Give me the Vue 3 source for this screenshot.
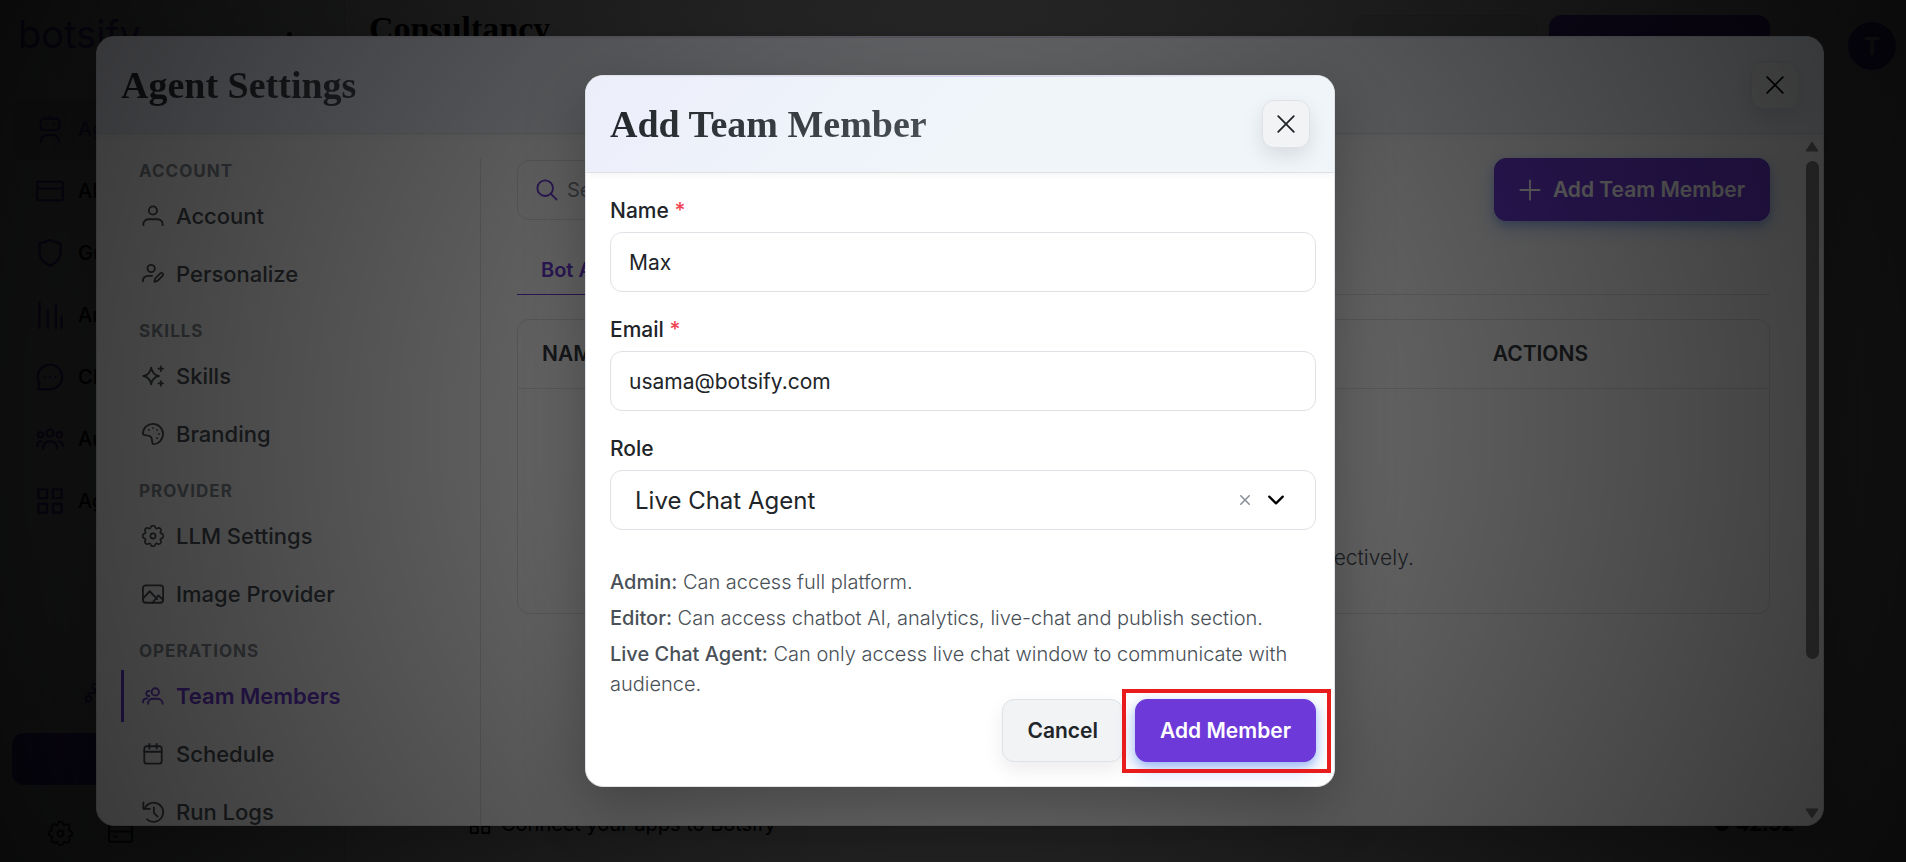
<script setup>
import { reactive, ref } from "vue";

const form = reactive({
  name: "Max",
  email: "usama@botsify.com",
  role: "Live Chat Agent"
});

const search = ref("");
const roles = ["Admin", "Editor", "Live Chat Agent"];

const roleHints = [
  { role: "Admin:", text: "Can access full platform." },
  {
    role: "Editor:",
    text: "Can access chatbot AI, analytics, live-chat and publish section."
  },
  {
    role: "Live Chat Agent:",
    text: "Can only access live chat window to communicate with audience."
  }
];

const gear =
  "M9.800 1.340c-.53-1.790-3.070-1.790-3.600 0l-.09.320a.870.870 0 0 1-1.260.520l-.29-.16c-1.640-.89-3.430.900-2.540 2.540l.16.290a.870.870 0 0 1-.52 1.260l-.32.090c-1.790.530-1.790 3.070 0 3.600l.32.090a.870.870 0 0 1 .52 1.260l-.16.290c-.89 1.640.900 3.430 2.540 2.540l.29-.16a.870.870 0 0 1 1.260.520l.09.320c.53 1.790 3.070 1.790 3.600 0l.09-.32a.870.870 0 0 1 1.260-.52l.29.160c1.640.890 3.430-.9 2.540-2.540l-.16-.29a.870.870 0 0 1 .52-1.260l.32-.09c1.790-.53 1.790-3.070 0-3.600l-.32-.09a.870.870 0 0 1-.52-1.260l.16-.29c.89-1.640-.9-3.430-2.540-2.540l-.29.160a.870.870 0 0 1-1.260-.52z";

const icons = {
  user: ["M12 1.500a4.500 4.500 0 1 1 0 9a4.500 4.500 0 0 1 0-9", "M1.500 22v-1.500c0-3 3-5 6-5h9c3 0 6 2 6 5V22"],
  userEdit: [
    "M10 2a4 4 0 1 1 0 8a4 4 0 0 1 0-8",
    "M1 20c0-4 2.500-6 6-6h4",
    "M13.500 20.500l.8-3.500 5.700-5.700c1.600-1.400 4 .8 2.500 2.500L17 19.500z"
  ],
  sparkles: [
    "M10 3c1 5.500 3 8 8.500 9c-5.500 1-7.500 3.500-8.500 9c-1-5.500-3-8-8.500-9c5.500-1 7.500-3.500 8.500-9z",
    "M20.500 1.500v5M18 4h5",
    "M20.500 17.500v5M18 20h5"
  ],
  palette: [
    "M1 11.500C1 5.500 6 1 12 1s11 5 11 11-5 11-10 11c-2 0-2-1.500-2-3.500 0-3.500-1.500-6-6-6-2.500 0-4-.5-4-2z",
    "M7.500 7.500h.01M12 5.500h.01M16.500 7.500h.01M18.500 12h.01M16.500 16.500h.01"
  ],
  gear: [gear, "M8 6a2 2 0 1 1 0 4a2 2 0 0 1 0-4"],
  image: [
    "M4 2.500h16a3 3 0 0 1 3 3v13a3 3 0 0 1-3 3H4a3 3 0 0 1-3-3v-13a3 3 0 0 1 3-3z",
    "M1 17l7.500-8 8 8.500M11.500 21.500l6.500-8 5 5"
  ],
  team: [
    "M14.500 3.500a4 4 0 1 1 0 8a4 4 0 0 1 0-8",
    "M6.500 20.500c0-4 3-5.500 5.500-5.500h5c3 0 5.500 2 5.500 5.500",
    "M8 6.500a2.800 2.800 0 1 0 0 5.500M1 19c0-3 2-4.500 5-4.500"
  ],
  calendar: [
    "M5 3.500h14a2.500 2.500 0 0 1 2.500 2.500v14a2.500 2.500 0 0 1-2.500 2.500H5A2.500 2.500 0 0 1 2.500 20V6A2.500 2.500 0 0 1 5 3.500z",
    "M2.500 9.500h19M8 1v5M16 1v5"
  ],
  history: ["M5.500 20A10.500 10.500 0 1 0 3.500 7", "M1.500 1.500V8.500h7", "M13 7v6l4 4"],
  search: ["M10 1.500a8.500 8.500 0 1 1 0 17a8.500 8.500 0 0 1 0-17", "M16 16l6.500 6.500"],
  plus: ["M12 1.500v21M1.500 12h21"],
  close: ["M3.500 3.500l17 17M20.500 3.500l-17 17"],
  chevron: ["M3 7.500l9 9 9-9"],
  bot: [
    "M7 3h10a3 3 0 0 1 3 3v4a3 3 0 0 1-3 3H7a3 3 0 0 1-3-3V6a3 3 0 0 1 3-3z",
    "M12 1v2M9 8h.01M15 8h.01M4 23c0-4 3-6 8-6s8 2 8 6"
  ],
  card: ["M3 4h18a2 2 0 0 1 2 2v12a2 2 0 0 1-2 2H3a2 2 0 0 1-2-2V6a2 2 0 0 1 2-2z", "M1 10h22"],
  billing: ["M3 4h18a2 2 0 0 1 2 2v12a2 2 0 0 1-2 2H3a2 2 0 0 1-2-2V6a2 2 0 0 1 2-2z", "M1 10h22M5.500 15h3"],
  shield: ["M12 1l9 3v8c0 5-4 8.500-9 11c-5-2.500-9-6-9-11V4z"],
  bars: ["M3 1v22M10 8v15M17 3v20M22 13v10"],
  chat: ["M2 22.500l1-5A10.500 10.500 0 1 1 12 22.500z", "M7.500 12h.01M12 12h.01M16.500 12h.01"],
  group: [
    "M12 4a3 3 0 1 1 0 6a3 3 0 0 1 0-6M4 6a2.300 2.300 0 1 1 0 4.600A2.300 2.300 0 0 1 4 6M20 6a2.300 2.300 0 1 1 0 4.600A2.300 2.300 0 0 1 20 6",
    "M6 20c0-4 2-6 6-6s6 2 6 6M1 18c0-3 1-4 3.500-4M23 18c0-3-1-4-3.500-4"
  ],
  grid: ["M2 2h7.500v7.500H2zM14.500 2H22v7.500h-7.500zM2 14.500h7.500V22H2zM14.500 14.500H22V22h-7.500z"],
  flow: [
    "M12 2a3 3 0 1 1 0 6a3 3 0 0 1 0-6M5 15.500a3 3 0 1 1 0 6a3 3 0 0 1 0-6M19 15.500a3 3 0 1 1 0 6a3 3 0 0 1 0-6",
    "M12 8v4M5 15v-3h14v3"
  ]
};

const appNav = [
  { label: "Agents", icon: "bot", active: true },
  { label: "AI Credits", icon: "card" },
  { label: "Guardrails", icon: "shield" },
  { label: "Analytics", icon: "bars" },
  { label: "Chats", icon: "chat" },
  { label: "Audience", icon: "group" },
  { label: "Agency", icon: "grid" }
];

const settingsGroups = [
  {
    title: "Account",
    items: [
      { label: "Account", icon: "user" },
      { label: "Personalize", icon: "userEdit" }
    ]
  },
  {
    title: "Skills",
    items: [
      { label: "Skills", icon: "sparkles" },
      { label: "Branding", icon: "palette" }
    ]
  },
  {
    title: "Provider",
    items: [
      { label: "LLM Settings", icon: "gear" },
      { label: "Image Provider", icon: "image" }
    ]
  },
  {
    title: "Operations",
    items: [
      { label: "Team Members", icon: "team", active: true },
      { label: "Schedule", icon: "calendar" },
      { label: "Run Logs", icon: "history" }
    ]
  }
];

// the gear is drawn on a 16 unit grid, every other icon on 24
function viewBox(name) {
  return name === "gear" ? "-0.5 -0.5 17 17" : "0 0 24 24";
}
</script>

<template>
  <div class="app">
    <aside class="app-sidebar">
      <div class="brand">
        <span>botsify</span>
        <i class="dot"></i>
      </div>

      <nav class="app-nav">
        <a
          v-for="item in appNav"
          :key="item.label"
          href="#"
          :class="['app-link', { 'is-active': item.active }]"
        >
          <svg class="icon icon-large" viewBox="0 0 24 24">
            <path v-for="d in icons[item.icon]" :key="d" :d="d" />
          </svg>
          {{ item.label }}
        </a>
      </nav>

      <div class="app-sidebar-bottom">
        <button class="flow-button" type="button" aria-label="Workflows">
          <svg class="icon" viewBox="0 0 24 24">
            <path v-for="d in icons.flow" :key="d" :d="d" />
          </svg>
        </button>
        <button class="upgrade-button" type="button" aria-label="Upgrade"></button>
        <div class="app-shortcuts">
          <svg class="icon icon-medium icon-gear" :viewBox="viewBox('gear')">
            <path v-for="d in icons.gear" :key="d" :d="d" />
          </svg>
          <svg class="icon icon-medium" viewBox="0 0 24 24">
            <path v-for="d in icons.billing" :key="d" :d="d" />
          </svg>
        </div>
      </div>
    </aside>

    <div class="app-main">
      <header class="app-header">
        <h1>Consultancy</h1>
        <div class="app-header-actions">
          <button class="outline-action" type="button" aria-label="Preview"></button>
          <button class="solid-action" type="button" aria-label="Publish"></button>
          <i class="dot dot-large"></i>
          <span class="avatar">T</span>
        </div>
      </header>
      <footer class="app-footer">
        <span class="app-footer-connect">
          <svg class="icon" viewBox="0 0 24 24">
            <path v-for="d in icons.grid" :key="d" :d="d" />
          </svg>
          Connect your apps to Botsify
        </span>
        <strong>● 42.92</strong>
      </footer>
    </div>

    <div class="overlay">
      <section class="modal settings-modal">
        <header class="modal-header">
          <h2>Agent Settings</h2>
          <button class="close-button" type="button" aria-label="Close settings">
            <svg class="icon" viewBox="0 0 24 24">
              <path v-for="d in icons.close" :key="d" :d="d" />
            </svg>
          </button>
        </header>

        <div class="settings-body">
          <nav class="settings-nav">
            <div v-for="group in settingsGroups" :key="group.title" class="settings-group">
              <h3>{{ group.title }}</h3>
              <a
                v-for="item in group.items"
                :key="item.label"
                href="#"
                :class="['settings-link', { 'is-active': item.active }]"
              >
                <svg :class="['icon', `icon-${item.icon}`]" :viewBox="viewBox(item.icon)">
                  <path v-for="d in icons[item.icon]" :key="d" :d="d" />
                </svg>
                {{ item.label }}
              </a>
            </div>
          </nav>

          <div class="settings-content">
            <div class="toolbar">
              <label class="search-box">
                <svg class="icon" viewBox="0 0 24 24">
                  <path v-for="d in icons.search" :key="d" :d="d" />
                </svg>
                <input v-model="search" type="text" placeholder="Search" aria-label="Search" />
              </label>
              <button class="primary-button" type="button">
                <svg class="icon" viewBox="0 0 24 24">
                  <path v-for="d in icons.plus" :key="d" :d="d" />
                </svg>
                Add Team Member
              </button>
            </div>

            <div class="tabs">
              <button class="tab" type="button">Bot Admins</button>
            </div>

            <div class="table-card">
              <table>
                <thead>
                  <tr>
                    <th class="name-column">NAME</th>
                    <th class="email-column">EMAIL</th>
                    <th>ACTIONS</th>
                  </tr>
                </thead>
                <tbody>
                  <tr>
                    <td colspan="3">Add team members to manage your chatbot effectively.</td>
                  </tr>
                </tbody>
              </table>
            </div>
          </div>

          <div class="scrollbar">
            <svg viewBox="0 0 14 11"><path d="M7 1l6 9H1z" /></svg>
            <div class="scrollbar-track"><div class="scrollbar-thumb"></div></div>
            <svg viewBox="0 0 14 11"><path d="M1 1h12L7 10z" /></svg>
          </div>
        </div>
      </section>
    </div>

    <div class="overlay">
      <form class="modal member-modal" @submit.prevent>
        <header class="modal-header">
          <h2>Add Team Member</h2>
          <button class="close-button" type="button" aria-label="Close">
            <svg class="icon" viewBox="0 0 24 24">
              <path v-for="d in icons.close" :key="d" :d="d" />
            </svg>
          </button>
        </header>

        <div class="member-body">
          <div class="field">
            <label for="member-name">Name <span class="required">*</span></label>
            <input id="member-name" v-model="form.name" type="text" />
          </div>

          <div class="field">
            <label for="member-email">Email <span class="required">*</span></label>
            <input id="member-email" v-model="form.email" type="email" />
          </div>

          <div class="field">
            <label for="member-role">Role</label>
            <div class="select-box">
              <select id="member-role" v-model="form.role">
                <option v-for="role in roles" :key="role">{{ role }}</option>
              </select>
              <button class="clear-button" type="button" aria-label="Clear role" @click="form.role = ''">
                <svg class="icon" viewBox="0 0 24 24">
                  <path v-for="d in icons.close" :key="d" :d="d" />
                </svg>
              </button>
              <svg class="icon chevron" viewBox="0 0 24 24">
                <path v-for="d in icons.chevron" :key="d" :d="d" />
              </svg>
            </div>
          </div>

          <div class="role-hints">
            <p v-for="hint in roleHints" :key="hint.role">
              <strong>{{ hint.role }}</strong> {{ hint.text }}
            </p>
          </div>

          <div class="member-actions">
            <button class="ghost-button" type="button">Cancel</button>
            <div class="highlighted">
              <button class="primary-button" type="submit">Add Member</button>
            </div>
          </div>
        </div>
      </form>
    </div>
  </div>
</template>

<style>
body {
  margin: 0;
  overflow: hidden;
}
</style>

<style scoped>
.app,
.app * {
  box-sizing: border-box;
}

.app {
  background: #ffffff;
  color: #212529;
  display: flex;
  font-family: Inter, "Liberation Sans", sans-serif;
  font-size: 20px;
  height: 100vh;
  overflow: hidden;
  position: relative;
}

button,
input,
select {
  font: inherit;
}

h1,
h2,
h3,
p {
  margin: 0;
}

a {
  color: inherit;
  text-decoration: none;
}

.icon {
  fill: none;
  flex: none;
  height: 22px;
  stroke: currentColor;
  stroke-linecap: round;
  stroke-linejoin: round;
  stroke-width: 2;
  width: 22px;
}

.icon-gear {
  stroke-width: 1.3;
}

.icon-medium {
  height: 25px;
  width: 25px;
}

.icon-large {
  height: 28px;
  width: 28px;
}

/* application shell */
.app-sidebar {
  background: #f4faf8;
  border-right: 1px solid #dee2e6;
  display: flex;
  flex-direction: column;
  padding: 12px 12px 16px;
  width: 345px;
}

.brand {
  align-items: center;
  color: #6d3ad9;
  display: flex;
  font-size: 38px;
  font-weight: 400;
  justify-content: space-between;
  line-height: 44px;
  padding: 0 40px 0 6px;
}

.dot {
  background: #000000;
  border-radius: 50%;
  height: 5px;
  width: 5px;
}

.dot-large {
  height: 7px;
  width: 7px;
}

.app-nav {
  display: flex;
  flex-direction: column;
  padding-top: 42px;
}

.app-link {
  align-items: center;
  border-radius: 12px;
  color: #000000;
  display: flex;
  font-weight: 500;
  gap: 14px;
  height: 62px;
  padding-left: 24px;
}

.app-link .icon,
.flow-button {
  color: #6d3ad9;
}

.app-link.is-active {
  background: #ebe4f5;
  color: #6d3ad9;
}

.app-sidebar-bottom {
  display: flex;
  flex-direction: column;
  gap: 12px;
  margin-top: auto;
}

.flow-button,
.upgrade-button {
  background: #f1f3fb;
  border: 0;
  border-radius: 12px;
  height: 52px;
  padding: 0 72px;
  text-align: left;
}

.upgrade-button {
  background: #6d3ad9;
}

.app-shortcuts {
  display: flex;
  gap: 35px;
  padding: 24px 36px 0;
}

.app-main {
  display: flex;
  flex: 1;
  flex-direction: column;
  justify-content: space-between;
}

.app-header {
  align-items: flex-start;
  display: flex;
  justify-content: space-between;
  padding: 10px 10px 0 24px;
}

.app-header h1 {
  color: #000000;
  font-family: "Liberation Serif", serif;
  font-size: 34px;
  line-height: 38px;
}

.app-header-actions {
  align-items: center;
  display: flex;
  padding-top: 5px;
}

.outline-action,
.solid-action {
  border: 1px solid #dee2e6;
  border-radius: 12px;
  height: 62px;
  margin-right: 12px;
  width: 184px;
}

.outline-action {
  background: #f1f3f5;
}

.solid-action {
  background: #6d3ad9;
  border-color: #6d3ad9;
  margin-right: 35px;
  width: 221px;
}

.avatar {
  align-items: center;
  background: #6d3ad9;
  border-radius: 50%;
  color: #ffffff;
  display: flex;
  font-size: 24px;
  font-weight: 700;
  height: 48px;
  justify-content: center;
  margin-left: 36px;
  width: 48px;
}

.app-footer {
  align-items: center;
  color: #000000;
  display: flex;
  justify-content: space-between;
  padding: 0 112px 26px 124px;
}

.app-footer-connect {
  align-items: center;
  display: flex;
  gap: 10px;
}

.overlay {
  align-items: center;
  background: radial-gradient(circle, rgba(0, 0, 0, 0.5), rgba(0, 0, 0, 0.8));
  display: flex;
  inset: 0 -14px 0 0;
  justify-content: center;
  position: absolute;
}

.modal {
  background: #ffffff;
  border: 1px solid #dee2e6;
  border-radius: 18px;
  box-shadow: 0 20px 60px rgba(0, 0, 0, 0.3);
  display: flex;
  flex-direction: column;
  overflow: hidden;
  position: relative;
}

.modal-header {
  align-items: center;
  background: linear-gradient(135deg, #eceefa, #f0f5fa 50%);
  border-bottom: 1px solid #dee2e6;
  box-shadow: 0 1px 8px rgba(0, 0, 0, 0.06);
  display: flex;
  flex: none;
  justify-content: space-between;
  padding: 24px;
}

.modal-header::before {
  background: linear-gradient(90deg, transparent, #d8ccf8, transparent);
  content: "";
  height: 1px;
  inset: 0 0 auto;
  position: absolute;
}

.modal-header h2 {
  background: linear-gradient(135deg, #212529, #495057);
  background-clip: text;
  color: transparent;
  font-family: "Liberation Serif", serif;
  font-size: 38px;
  font-weight: 700;
  line-height: 48px;
}

.close-button {
  align-items: center;
  background: #f1f3f5;
  border: 1px solid #dee2e6;
  border-radius: 12px;
  box-shadow: 0 8px 20px rgba(0, 0, 0, 0.1);
  color: #212529;
  display: flex;
  height: 48px;
  justify-content: center;
  padding: 0;
  width: 48px;
}

.settings-modal .close-button {
  color: #000000;
}

/* settings dialog */
.settings-modal {
  height: calc(100% - 72px);
  width: 90%;
}

.settings-body {
  display: flex;
  flex: 1;
  min-height: 0;
  padding-left: 24px;
}

.settings-nav {
  border-right: 1px solid #dee2e6;
  display: flex;
  flex: none;
  flex-direction: column;
  gap: 18px;
  margin-top: 24px;
  width: 360px;
}

.settings-group {
  display: flex;
  flex-direction: column;
  gap: 6px;
}

.settings-group h3 {
  color: #868e96;
  font-size: 17px;
  font-weight: 700;
  letter-spacing: 1px;
  line-height: 26px;
  padding-left: 18px;
  text-transform: uppercase;
}

.settings-link {
  align-items: center;
  border-left: 3px solid transparent;
  color: #495057;
  display: flex;
  font-size: 22px;
  font-weight: 500;
  gap: 12px;
  height: 52px;
  padding-left: 18px;
}

.settings-link.is-active {
  border-left-color: #6d3ad9;
  color: #6d3ad9;
  font-weight: 600;
}

.settings-content {
  display: flex;
  flex: 1;
  flex-direction: column;
  padding: 24px 35px 0 36px;
}

.toolbar {
  align-items: center;
  display: flex;
  justify-content: space-between;
}

.search-box {
  align-items: center;
  border: 1px solid #dee2e6;
  border-radius: 12px;
  display: flex;
  gap: 9px;
  height: 60px;
  padding: 0 18px;
  width: 420px;
}

.search-box .icon {
  color: #6d3ad9;
}

.search-box input {
  background: none;
  border: 0;
  flex: 1;
  min-width: 0;
  outline: 0;
  padding: 0;
}

.search-box input::placeholder {
  color: #868e96;
}

.primary-button,
.ghost-button {
  align-items: center;
  background: #6d3ad9;
  border: 1px solid #6d3ad9;
  border-radius: 12px;
  box-shadow: 0 8px 20px rgba(37, 99, 235, 0.25), 0 4px 8px rgba(37, 99, 235, 0.3);
  color: #ffffff;
  display: flex;
  font-size: 21px;
  font-weight: 600;
  gap: 12px;
  height: 63px;
  padding: 0 24px;
  white-space: nowrap;
}

.ghost-button {
  background: #f1f3f5;
  border-color: #dee2e6;
  box-shadow: 0 8px 20px rgba(0, 0, 0, 0.08);
  color: #212529;
}

.tabs {
  border-bottom: 1px solid #dee2e6;
  display: flex;
  margin-top: 24px;
}

.tab {
  background: none;
  border: 0;
  border-bottom: 1px solid #6d3ad9;
  color: #6d3ad9;
  font-weight: 600;
  height: 50px;
  margin-bottom: -1px;
  padding: 0 24px;
}

.table-card {
  border: 1px solid #dee2e6;
  border-radius: 12px;
  margin-top: 24px;
}

table {
  border-collapse: collapse;
  width: 100%;
}

th {
  border-bottom: 1px solid #dee2e6;
  color: #343a40;
  font-size: 21px;
  font-weight: 600;
  height: 68px;
  padding: 0 24px;
  text-align: left;
}

.name-column,
.email-column {
  width: 38%;
}

td {
  color: #495057;
  font-size: 21px;
  font-weight: 300;
  height: 225px;
  padding: 156px 0 0;
  text-align: center;
  vertical-align: top;
}

.scrollbar {
  align-items: center;
  display: flex;
  flex-direction: column;
  gap: 9px;
  padding: 7px 4px 6px 0;
  width: 18px;
}

.scrollbar svg {
  fill: #858585;
  stroke: #858585;
  stroke-linejoin: round;
  width: 14px;
}

.scrollbar-track {
  flex: 1;
}

.scrollbar-thumb {
  background: #858585;
  border-radius: 7px;
  height: 78%;
  width: 13px;
}

/* add member dialog */
.member-modal {
  width: 750px;
}

.member-body {
  display: flex;
  flex-direction: column;
  gap: 24px;
  padding: 24px 18px 24px 24px;
}

.field {
  display: flex;
  flex-direction: column;
  gap: 8px;
}

.field label {
  font-size: 21px;
  font-weight: 500;
  line-height: 27px;
}

.required {
  color: #f04452;
}

.field input,
.select-box {
  background: #ffffff;
  border: 1px solid #dee2e6;
  border-radius: 12px;
  color: #212529;
  font-size: 21px;
  height: 60px;
  outline: 0;
  padding: 0 18px;
}

.select-box {
  align-items: center;
  display: flex;
  gap: 16px;
  padding: 0 30px 0 24px;
}

.select-box select {
  appearance: none;
  background: none;
  border: 0;
  color: #212529;
  flex: 1;
  font-size: 24px;
  outline: 0;
  padding: 0;
}

.clear-button {
  background: none;
  border: 0;
  color: #868e96;
  display: flex;
  padding: 0;
}

.clear-button .icon {
  height: 12px;
  stroke-width: 3;
  width: 12px;
}

.chevron {
  color: #000000;
  height: 18px;
  stroke-width: 3;
  width: 18px;
}

.role-hints {
  color: #495057;
  display: flex;
  flex-direction: column;
  font-weight: 300;
  gap: 6px;
  line-height: 30px;
  padding-top: 13px;
}

.role-hints strong {
  font-weight: 500;
}

.member-actions {
  display: flex;
  gap: 12px;
  justify-content: flex-end;
  margin-top: -24px;
}

.highlighted {
  position: relative;
}

.highlighted::after {
  border: 4px solid #e81c1c;
  content: "";
  inset: -10px -15px -11px -13px;
  pointer-events: none;
  position: absolute;
}
</style>
